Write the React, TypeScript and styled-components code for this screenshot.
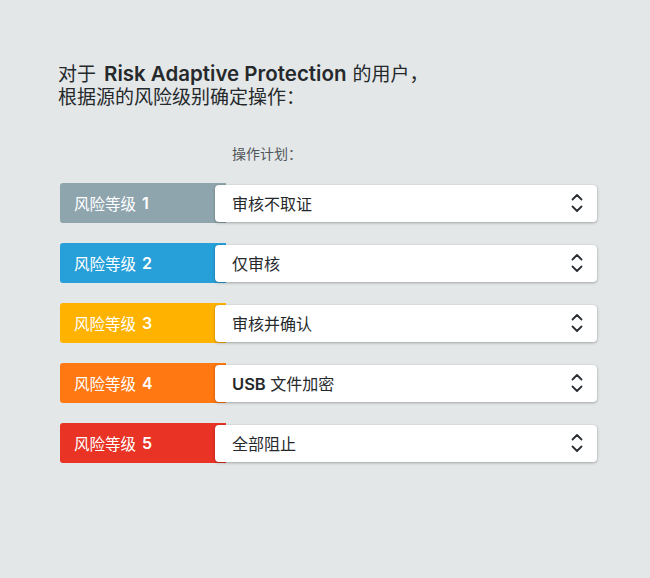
import React from 'react';
import styled, { createGlobalStyle } from 'styled-components';

const GlobalStyle = createGlobalStyle`
  body {
    margin: 0;
    background: #e3e7e8;
    font-family: 'Inter', 'Noto Sans CJK SC', sans-serif;
  }
`;

type Level = {
  level: number;
  color: string;
  action: React.ReactNode;
};

const levels: Array<Level> = [
  { level: 1, color: '#8fa5ae', action: '审核不取证' },
  { level: 2, color: '#279fd8', action: '仅审核' },
  { level: 3, color: '#ffb300', action: '审核并确认' },
  { level: 4, color: '#ff7811', action: <><b>USB</b> 文件加密</> },
  { level: 5, color: '#e83325', action: '全部阻止' },
];

const Page = styled.div`
  width: 650px;
  height: 578px;
  box-sizing: border-box;
  padding: 62px 0 0 58px;
`;

const Heading = styled.h1`
  margin: 0;
  font-size: 19px;
  font-weight: 400;
  line-height: 23px;
  color: #26292c;

  b {
    font-size: 20.5px;
    font-weight: 600;
    margin: 0 6px 0 8px;
  }
`;

const PlanTitle = styled.div`
  margin: 35px 0 0 174px;
  font-size: 14px;
  line-height: 20px;
  color: #50565a;
`;

const List = styled.div`
  margin-top: 19px;
  display: flex;
  flex-direction: column;
  gap: 20px;
`;

const Row = styled.div`
  display: flex;
  align-items: center;
  height: 40px;
  margin-left: 2px;
`;

const LevelTag = styled.div<{ color: string }>`
  width: 166px;
  height: 40px;
  flex-shrink: 0;
  box-sizing: border-box;
  padding-left: 14px;
  display: flex;
  align-items: center;
  background: ${({ color }) => color};
  border-radius: 3px 0 0 3px;
  color: #fff;
  font-size: 15.5px;

  b {
    font-size: 16px;
    font-weight: 600;
    margin-left: 6px;
  }
`;

const Select = styled.div`
  margin-left: -11px;
  width: 382px;
  height: 37px;
  box-sizing: border-box;
  padding: 0 14px 0 17px;
  display: flex;
  align-items: center;
  justify-content: space-between;
  background: #fff;
  border-radius: 4px;
  box-shadow: 0 1px 3px rgba(0, 0, 0, 0.28), 0 0 1px rgba(0, 0, 0, 0.15);
  color: #26292c;
  font-size: 16px;

  b {
    font-size: 16.5px;
    font-weight: 600;
  }
`;

const Chevrons = () => (
  <svg width="12" height="20" viewBox="0 0 12 20" fill="none" stroke="#2a2e33" strokeWidth="1.8" strokeLinecap="round" strokeLinejoin="round">
    <path d="M1.5 6.5 L6 2 L10.5 6.5" />
    <path d="M1.5 13.5 L6 18 L10.5 13.5" />
  </svg>
);

const App = () => (
  <Page>
    <GlobalStyle />
    <Heading>
      对于<b>Risk Adaptive Protection</b>的用户，
      <br />
      根据源的风险级别确定操作：
    </Heading>
    <PlanTitle>操作计划：</PlanTitle>
    <List>
      {levels.map((item) => (
        <Row key={item.level}>
          <LevelTag color={item.color}>
            风险等级<b>{item.level}</b>
          </LevelTag>
          <Select>
            <span>{item.action}</span>
            <Chevrons />
          </Select>
        </Row>
      ))}
    </List>
  </Page>
);

export default App;
